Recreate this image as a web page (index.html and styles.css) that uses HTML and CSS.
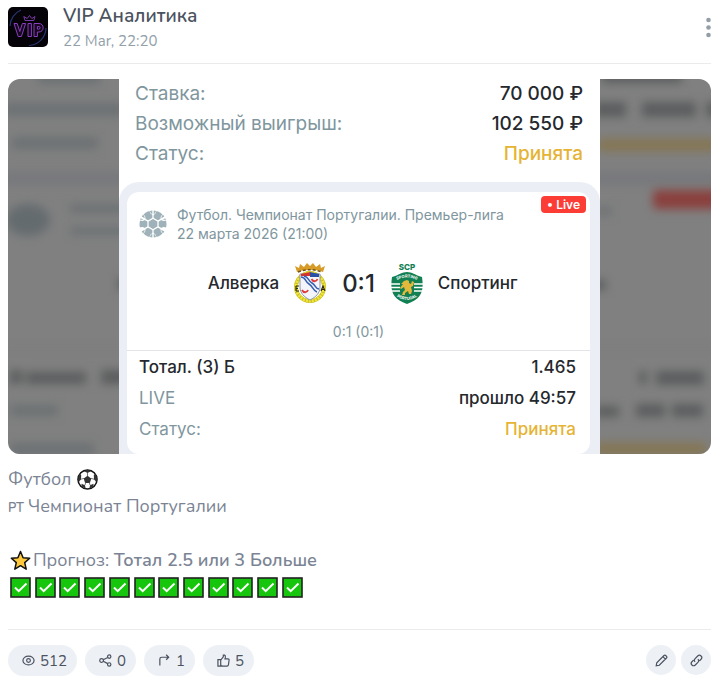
FILE: index.html
```html
<!DOCTYPE html>
<html lang="ru">
<head>
    <meta charset="UTF-8">
    <meta name="viewport" content="width=device-width, initial-scale=1.0">
    <title>VIP Аналитика</title>
    <link rel="stylesheet" href="styles.css">
</head>
<body>
    <!-- Shared icons -->
    <svg class="sprite" aria-hidden="true">
        <symbol id="check" viewBox="0 0 21 21">
            <rect x="1" y="1" width="19" height="19" fill="#16c60c" stroke="#222" stroke-width="1.600"/>
            <path d="M5 10.500l3.700 3.700L16.500 6.500" fill="none" stroke="#fff" stroke-width="2"/>
        </symbol>
    </svg>

    <article class="post">
        <header class="post-header">
            <svg class="avatar" viewBox="0 0 40 40" role="img" aria-label="VIP">
                <rect width="40" height="40" fill="#050308"/>
                <path d="M2 19A18 18 0 0 1 13 3M38 21A18 18 0 0 1 21 38.500" fill="none" stroke="#27346f" stroke-width="1.200"/>
                <path d="M17 13.500l-1.200-4 3.400 2 2.300-3 2.300 3 3.200-2-1.200 4z" fill="none" stroke="#7a3aa8" stroke-width="1"/>
                <g fill="#16061f" stroke="#8a3fbd" stroke-width="1">
                    <path d="M6 16.500h3.200l2.600 8 2.600-8h3.200l-4.200 13h-3.200z"/>
                    <path d="M20 16.500h3.400v13H20z"/>
                    <path d="M26 16.500h5c5.500 0 5.500 8.500 0 8.500h-1.600v4.500H26zM29.400 19.500v2.600h1.500c1.600 0 1.600-2.600 0-2.600z"/>
                </g>
            </svg>
            <div class="post-author">
                <h1 class="post-title">VIP Аналитика</h1>
                <time class="post-date">22 Mar, 22:20</time>
            </div>
            <button class="menu-button" type="button" aria-label="Меню">
                <svg width="5" height="21" viewBox="0 0 5 21" fill="#929fa8">
                    <circle cx="2.500" cy="3" r="2.300"/>
                    <circle cx="2.500" cy="10.500" r="2.300"/>
                    <circle cx="2.500" cy="18" r="2.300"/>
                </svg>
            </button>
        </header>

        <div class="media">
            <!-- Blurred backdrop behind the slip -->
            <svg class="media-backdrop" viewBox="0 0 703 375" preserveAspectRatio="none" aria-hidden="true">
                <defs>
                    <filter id="soft" x="-10%" y="-10%" width="120%" height="120%" color-interpolation-filters="sRGB">
                        <feGaussianBlur stdDeviation="5"/>
                    </filter>
                </defs>
                <rect width="703" height="375" fill="#808080"/>
                <g filter="url(#soft)">
                    <rect x="-10" y="93" width="730" height="13" fill="#77787c"/>
                    <rect x="-10" y="269" width="730" height="2" fill="#767676"/>
                    <g fill="#6c7173">
                        <rect x="30" y="-8" width="62" height="13"/>
                        <rect x="-4" y="24" width="120" height="13"/>
                        <rect x="4" y="58" width="86" height="12"/>
                        <ellipse cx="20" cy="141" rx="22" ry="16" fill="#646b6e"/>
                        <rect x="62" y="125" width="60" height="9"/>
                        <rect x="62" y="148" width="60" height="8"/>
                        <rect x="2" y="326" width="48" height="11"/>
                        <rect x="2" y="364" width="84" height="12"/>
                        <rect x="588" y="128" width="16" height="8"/>
                    </g>
                    <g fill="#5b5d5e">
                        <rect x="594" y="-8" width="80" height="12"/>
                        <rect x="586" y="23" width="32" height="15"/>
                        <rect x="634" y="23" width="54" height="15"/>
                        <rect x="698" y="23" width="14" height="15"/>
                        <rect x="2" y="291" width="12" height="14"/>
                        <rect x="18" y="293" width="60" height="12"/>
                        <rect x="93" y="291" width="30" height="14"/>
                        <rect x="110" y="199" width="20" height="12"/>
                        <rect x="580" y="201" width="18" height="10"/>
                        <rect x="631" y="292" width="8" height="13"/>
                        <rect x="648" y="292" width="48" height="14"/>
                        <rect x="586" y="327" width="25" height="11"/>
                        <rect x="628" y="325" width="29" height="13"/>
                        <rect x="664" y="325" width="31" height="13"/>
                    </g>
                    <g fill="#857551">
                        <rect x="590" y="60" width="120" height="12"/>
                        <rect x="588" y="364" width="110" height="12"/>
                    </g>
                    <rect x="645" y="111" width="80" height="19" rx="4" fill="#8a403d"/>
                </g>
            </svg>

            <section class="slip">
                <dl class="summary">
                    <div class="row">
                        <dt>Ставка:</dt>
                        <dd>70 000 ₽</dd>
                    </div>
                    <div class="row">
                        <dt>Возможный выигрыш:</dt>
                        <dd>102 550 ₽</dd>
                    </div>
                    <div class="row">
                        <dt>Статус:</dt>
                        <dd class="accepted">Принята</dd>
                    </div>
                </dl>

                <div class="event-wrap">
                    <div class="event">
                        <span class="live-badge">• Live</span>
                        <div class="event-header">
                            <svg class="sport-icon" viewBox="0 0 28 28" aria-hidden="true">
                                <circle cx="14" cy="14" r="13.500" fill="#9fb2b9"/>
                                <g fill="none" stroke="#fff" stroke-width="1.300">
                                    <path d="M14 8.300l5 2.800v5.800l-5 2.800-5-2.800v-5.800z"/>
                                    <path d="M14 8.300V0M19 11.100l7-4M19 16.900l7 4M14 19.700V28M9 16.900l-7 4M9 11.100l-7-4"/>
                                </g>
                                <path d="M14 5.500L11.500 3.500 10 0h8l-1.500 3.500zM14 22.500l-2.500 2L10 28h8l-1.500-3.500zM21.400 9.700l.4-3.200L24.100 3.400l4 7-3.800.500zM21.400 18.300l.4 3.200 2.300 3.100 4-7-3.800-.5zM6.600 9.700l-.4-3.200L3.900 3.400l-4 7 3.800.500zM6.600 18.300l-.4 3.200-2.300 3.100-4-7 3.800-.5z" fill="#fff"/>
                                <path d="M13.300.500v3.700l-1.500-1.300L10.900.900zM14.700.500v3.700l1.500-1.300.9-2zM13.300 27.500v-3.700l-1.500 1.300-.9 2zM14.700 27.500v-3.700l1.500 1.300.9 2zM25.300 6.600l-3 1.700.3-1.800 1.300-1.900zM26.200 8.200l-2.800 1.700 1.500-.1 2.100-.1zM2.700 6.600l3 1.700-.3-1.800-1.300-1.900zM1.800 8.200l2.800 1.700-1.500-.1-2.100-.1zM25.300 21.400l-3-1.700.3 1.800 1.300 1.900zM2.700 21.400l3-1.700-.3 1.800-1.300 1.900z" fill="#9fb2b9"/>
                            </svg>
                            <div class="event-info">
                                <p>Футбол. Чемпионат Португалии. Премьер-лига</p>
                                <p>22 марта 2026 (21:00)</p>
                            </div>
                        </div>

                        <div class="teams">
                            <div class="team team-home">
                                <span>Алверка</span>
                                <svg class="crest" viewBox="0 0 32 42" aria-hidden="true">
                                    <circle cx="16" cy="25" r="14" fill="none" stroke="#c9bd20" stroke-width="4"/>
                                    <circle cx="16" cy="25" r="14" fill="none" stroke="#f0e63c" stroke-width="3" stroke-dasharray="2 1"/>
                                    <path d="M6 12h20v13c0 6-4 10-10 13C10 35 6 31 6 25z" fill="#f4f5fa" stroke="#8b92a8" stroke-width="1"/>
                                    <path d="M7 12l9-2v4H7z" fill="#d8322d"/>
                                    <path d="M16 10l9 2v3h-9z" fill="#2b4fa5"/>
                                    <path d="M7 15c5 0 4 5 8 7s4 7 8 8M10 14c5 1 4 5 8 7s3 6 7 6" fill="none" stroke="#345db0" stroke-width="1.500"/>
                                    <path d="M17.500 17c1.500 3 5 3 6 0M8 28c1.500 3 5 3 6 0" fill="none" stroke="#e03b3b" stroke-width="1.800"/>
                                    <path d="M2 24v5M2 24h3M2 26.500h2M2 29h3M27 29l2-5 2 5M28 27.500h2" fill="none" stroke="#2b2a12" stroke-width="1.200"/>
                                    <path d="M3 10L1 4l4 2 1-4 4 3 3-4 3 3 3-3 3 4 4-3 1 4 4-2-2 6c-8-3-18-3-26 0z" fill="#d69c27"/>
                                    <path d="M4 10c8-3 16-3 24 0" fill="none" stroke="#725016" stroke-width="1.500" stroke-dasharray="3 2"/>
                                </svg>
                            </div>
                            <strong class="score">0:1</strong>
                            <div class="team team-away">
                                <svg class="crest" viewBox="0 0 32 42" aria-hidden="true">
                                    <text class="crest-top" x="16" y="8" text-anchor="middle">SCP</text>
                                    <path d="M1 15C8 13 11 10 16 10s8 3 15 5c2 14 0 22-15 27C1 37-1 29 1 15z" fill="#128052"/>
                                    <path d="M0 22h32M0 25.500h32M0 29h32" stroke="#fff" stroke-width="1.500"/>
                                    <path d="M9 19c4-2 10-2 14 0v13c-5 3-9 3-14 0z" fill="#128052"/>
                                    <path id="arc-top" d="M3 20Q16 11 29 20" fill="none"/>
                                    <path id="arc-bottom" d="M4 33Q16 43 28 33" fill="none"/>
                                    <text class="crest-ring"><textPath href="#arc-top" startOffset="50%" text-anchor="middle">SPORTING</textPath></text>
                                    <text class="crest-ring"><textPath href="#arc-bottom" startOffset="50%" text-anchor="middle">PORTUGAL</textPath></text>
                                    <path d="M13 19l3-1 2 1v2l2 1 1-3 2 1-1 4-2 1 1 4-1 3h-2l-1-3-3 2v2h-3l1-3 2-2-1-3-3 2-1-1 3-4-2 0z" fill="#e3b83b"/>
                                </svg>
                                <span>Спортинг</span>
                            </div>
                        </div>
                        <p class="periods">0:1 (0:1)</p>

                        <dl class="details">
                            <div class="row">
                                <dt class="market">Тотал. (3) Б</dt>
                                <dd>1.465</dd>
                            </div>
                            <div class="row">
                                <dt>LIVE</dt>
                                <dd>прошло 49:57</dd>
                            </div>
                            <div class="row">
                                <dt>Статус:</dt>
                                <dd class="accepted">Принята</dd>
                            </div>
                        </dl>
                    </div>
                </div>
            </section>
        </div>

        <div class="post-text">
            <p>Футбол
                <svg class="emoji" viewBox="0 0 21 21" role="img" aria-label="Мяч">
                    <circle cx="10.500" cy="10.500" r="9.500" fill="#fff" stroke="#111" stroke-width="1.600"/>
                    <path d="M10.500 6.700l3.800 2.700-1.400 4.500H8.100L6.700 9.400zM6.700 2l3.800 2 3.800-2-3.800-1.200zM1.200 8l.3 5L4 10.500 4.200 6 2.800 5zM19.800 8l-.3 5-2.500-2.500L16.800 6l1.400-1zM4.500 17.500l4.200 2.200-.7-3.500-3.500-1.500zM16.500 17.500l-4.200 2.200.7-3.500 3.500-1.500z" fill="#333"/>
                    <path d="M10.500 4v3M4 10.200l3-.8M17 10.200l-3-.8M8 16l.6-2.300M13 16l-.6-2.300" stroke="#777" stroke-width="1"/>
                </svg>
            </p>
            <p class="league"><span class="flag">PT</span> Чемпионат Португалии</p>
            <p class="forecast">
                <svg class="emoji" viewBox="0 0 21 21" aria-hidden="true">
                    <path d="M10.500 1.500l2.600 6.200 6.600.5-5 4.400 1.500 6.600-5.700-3.500-5.700 3.500 1.500-6.600-5-4.400 6.600-.5z" fill="#ffc83d" stroke="#111" stroke-width="1.500" stroke-linejoin="round"/>
                </svg><span>Прогноз: <b>Тотал 2.5 или 3 Больше</b></span>
            </p>
            <div class="checks" role="img" aria-label="12 из 12">
                <svg><use href="#check"/></svg>
                <svg><use href="#check"/></svg>
                <svg><use href="#check"/></svg>
                <svg><use href="#check"/></svg>
                <svg><use href="#check"/></svg>
                <svg><use href="#check"/></svg>
                <svg><use href="#check"/></svg>
                <svg><use href="#check"/></svg>
                <svg><use href="#check"/></svg>
                <svg><use href="#check"/></svg>
                <svg><use href="#check"/></svg>
                <svg><use href="#check"/></svg>
            </div>
        </div>

        <footer class="post-footer">
            <button class="pill" type="button" aria-label="Просмотры">
                <svg viewBox="0 0 14 14">
                    <ellipse cx="7" cy="7" rx="6" ry="4.800"/>
                    <circle cx="7" cy="7" r="2"/>
                </svg>
                512
            </button>
            <button class="pill" type="button" aria-label="Поделиться">
                <svg viewBox="0 0 14 14">
                    <circle cx="2.800" cy="7" r="2"/>
                    <circle cx="11" cy="2.800" r="1.800"/>
                    <circle cx="11" cy="11.200" r="1.800"/>
                    <path d="M4.600 6.200l4.800-2.500M4.600 7.900l4.800 2.500"/>
                </svg>
                0
            </button>
            <button class="pill" type="button" aria-label="Переслать">
                <svg viewBox="0 0 14 14">
                    <path d="M2 12.500V5.500Q2 3.500 4 3.500h7.500M8.800.8l2.700 2.700-2.700 2.700"/>
                </svg>
                1
            </button>
            <button class="pill" type="button" aria-label="Нравится">
                <svg viewBox="0 0 14 14">
                    <path d="M1 6h3v7H1zM4 6.500L6.800 3V1.200h1.400q1.200.8.700 3L8.600 5.300h3.200q1.400 0 1.200 1.400l-.7 5Q12.100 13 10.800 13H5.500L4 12"/>
                </svg>
                5
            </button>
            <div class="tools">
                <button class="tool" type="button" aria-label="Редактировать">
                    <svg viewBox="0 0 14 14">
                        <path d="M1.300 12.700l.6-3.300L9.700 1.600q.9-.8 1.800 0l.9.900q.8.900 0 1.800L4.600 12.100zM8.500 2.800l2.700 2.700"/>
                    </svg>
                </button>
                <a class="tool" href="#" aria-label="Ссылка">
                    <svg viewBox="0 0 14 14">
                        <path d="M5.500 8.500a2.600 2.600 0 0 1 0-3.600l2.800-2.800a2.500 2.500 0 0 1 3.600 3.600L10.200 7.400M8.500 5.500a2.600 2.600 0 0 1 0 3.600l-2.800 2.800a2.500 2.500 0 0 1-3.600-3.600L3.800 6.600"/>
                    </svg>
                </a>
            </div>
        </footer>
    </article>
</body>
</html>
```
FILE: styles.css
```css
/* Reset */
* {
    margin: 0;
    padding: 0;
    box-sizing: border-box;
}

body {
    background-color: #fff;
    color: #7b8494;
    font-family: Nunito, "Open Sans", sans-serif;
    font-size: 18px;
}

button {
    border: none;
    background: none;
    font-family: inherit;
    cursor: pointer;
}

svg {
    display: block;
}

.sprite {
    display: none;
}

.post {
    padding: 4px 14px 9px 8px;
}

/* Header */
.post-header {
    display: flex;
    align-items: flex-start;
    gap: 15px;
    padding-bottom: 9px;
    border-bottom: 1px solid #ebebed;
}

.avatar {
    width: 40px;
    height: 40px;
    margin-top: 3px;
    border-radius: 5px;
    overflow: hidden;
}

.post-author {
    flex: 1;
    line-height: 25px;
}

.post-title {
    color: #4b5260;
    font-size: 19px;
    font-weight: 600;
}

.post-date {
    display: block;
    color: #92a0aa;
    font-size: 15px;
}

.menu-button {
    margin-top: 13px;
}

/* Picture with the bet slip */
.media {
    position: relative;
    margin-top: 15px;
    border-radius: 12px;
    overflow: hidden;
}

.media-backdrop {
    position: absolute;
    top: 0;
    left: 0;
    width: 100%;
    height: 100%;
}

.slip {
    position: relative;
    max-width: 481px;
    margin: 0 auto;
    background-color: #fff;
    color: #25282d;
    font-family: Inter, sans-serif;
    font-size: 17px;
}

.row {
    display: flex;
    justify-content: space-between;
}

.row dt {
    color: #80969e;
}

.row dd {
    font-weight: 500;
}

.row .market {
    color: #25282d;
    font-weight: 500;
}

.row .accepted {
    color: #e5b435;
}

.summary {
    padding: 0 17px 13px 16px;
    font-size: 19px;
    line-height: 30px;
}

.event-wrap {
    padding: 10px 10px 0 8px;
    border-radius: 20px 20px 0 0;
    background-color: #ebeef4;
}

.event {
    position: relative;
    border-radius: 12px;
    background-color: #fff;
}

.live-badge {
    position: absolute;
    top: 4px;
    right: 4px;
    padding: 0 6px;
    border-radius: 4px;
    background-color: #fc3d36;
    color: #fff;
    font-size: 12px;
    font-weight: 600;
    line-height: 17px;
}

.event-header {
    display: flex;
    align-items: center;
    gap: 10px;
    padding: 13px 12px 0;
    color: #80969e;
    font-size: 14px;
    line-height: 19px;
}

.sport-icon {
    flex: none;
    width: 28px;
    height: 28px;
}

.teams {
    display: grid;
    grid-template-columns: 1fr auto 1fr;
    align-items: center;
    gap: 16px;
    padding-top: 19px;
    font-size: 17px;
    font-weight: 500;
}

.team {
    display: flex;
    align-items: center;
    gap: 15px;
}

.team-home {
    justify-content: flex-end;
}

.crest {
    width: 32px;
    height: 42px;
}

.crest-top {
    fill: #128052;
    font-size: 8px;
    font-weight: 800;
}

.crest-ring {
    fill: #fff;
    font-size: 4px;
    font-weight: 700;
}

.score {
    font-size: 24px;
    font-weight: 500;
}

.periods {
    padding: 18px 0 8px;
    color: #80969e;
    font-size: 14px;
    line-height: 20px;
    text-align: center;
}

.details {
    padding: 1px 14px 9px 12px;
    border-top: 1px solid #e2e4e8;
    line-height: 31px;
}

/* Post text */
.post-text {
    padding-top: 12px;
    line-height: 27px;
}

.post-text p {
    display: flex;
    align-items: center;
    gap: 6px;
}

.post-text b {
    font-weight: 600;
}

.post-text .league {
    align-items: baseline;
    gap: 4px;
}

.flag {
    font-size: 13px;
    font-weight: 600;
    line-height: 1;
}

.post-text .forecast {
    gap: 2px;
    margin-top: 27px;
}

.emoji {
    width: 21px;
    height: 21px;
}

.forecast .emoji {
    margin-left: 2px;
}

.checks {
    display: flex;
    justify-content: space-between;
    max-width: 295px;
    padding: 3px 0 3px 2px;
}

.checks svg {
    width: 21px;
    height: 21px;
}

/* Footer */
.post-footer {
    display: flex;
    gap: 8px;
    margin-top: 28px;
    padding-top: 15px;
    border-top: 1px solid #ebebed;
}

.pill {
    display: flex;
    align-items: center;
    gap: 5px;
    height: 31px;
    padding: 0 10px 0 14px;
    border-radius: 16px;
    background-color: #edf1f6;
    color: #4b5260;
    font-size: 15px;
}

.pill svg,
.tool svg {
    width: 13px;
    height: 13px;
    fill: none;
    stroke: #4b5260;
    stroke-width: 1.3;
}

.tools {
    display: flex;
    gap: 5px;
    margin-left: auto;
}

.tool {
    display: flex;
    align-items: center;
    justify-content: center;
    width: 30px;
    height: 30px;
    border-radius: 50%;
    background-color: #edf1f6;
}
```
